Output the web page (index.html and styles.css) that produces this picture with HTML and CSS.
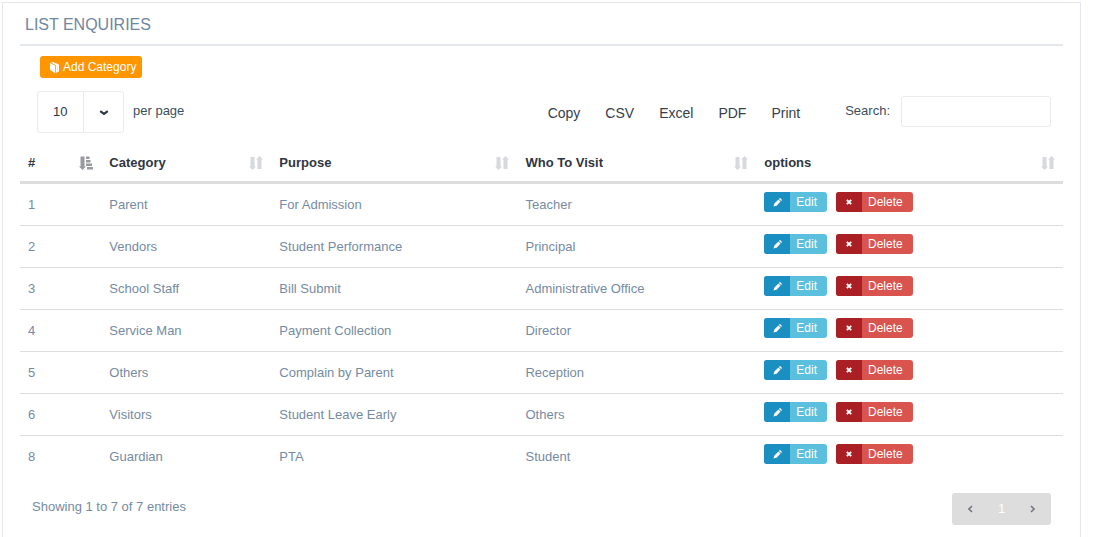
FILE: index.html
```
<!DOCTYPE html>
<html lang="en">
<head>
<meta charset="utf-8">
<title>List Enquiries</title>
<link rel="stylesheet" href="styles.css">
</head>
<body>
<svg class="sprite" aria-hidden="true">
  <symbol id="sort" viewBox="0 0 14 14"><path d="M1.5 1h4v9.500H7L3.500 14 0 10.500h1.500zM10.500 0L14 3.500h-1.500V13h-4V3.500H7z"/></symbol>
  <symbol id="sorted" viewBox="0 0 14 14"><path d="M1.500 0.500h4v10H7L3.500 14 0 10.500h1.500zM7 0.500h3.500v2.500H7zM7 4h4.500v2.500H7zM7 7.500h6V10H7zM8 11h6v2.500H8z"/></symbol>
  <symbol id="pencil" viewBox="0 0 10 10"><path d="M0.500 9.500l1-3.500L6 1.600 8.400 4 4 8.500zM6.600 1l.6-.6q.5-.4 1 0l1.400 1.400q.4.500 0 1L9 3.400z"/></symbol>
  <symbol id="cross" viewBox="0 0 6 6"><path d="M.8.8l4.400 4.400M5.200.8L.8 5.200" fill="none" stroke="currentColor" stroke-width="1.900"/></symbol>
</svg>
<main class="panel">
  <h1 class="panel-title">LIST ENQUIRIES</h1>
  <button class="add" type="button"><svg class="book" viewBox="0 0 10 11"><path d="M0 1l5 2.500V11L0 8z" fill="#fff"/><path d="M1 .8L3 0l6 2.500V9.500L5.800 11V3.200z" fill="#fff"/><path d="M1 1l4.600 2.300V11" fill="none" stroke="#ffb43c" stroke-width=".7"/><path d="M7.500 3.500v6" stroke="#ffe08a" stroke-width=".8"/></svg>Add Category</button>
  <div class="toolbar">
    <div class="length">
      <span class="select-box">
        <select class="select" id="length"><option>10</option><option>25</option><option>50</option></select>
        <svg class="chevron" viewBox="0 0 10 6"><path d="M1.200 1.200L5 4l3.800-2.800" fill="none" stroke="currentColor" stroke-width="2.200"/></svg>
      </span>
      <label for="length">per page</label>
    </div>
    <div class="exports">
      <button class="export" type="button">Copy</button>
      <button class="export" type="button">CSV</button>
      <button class="export" type="button">Excel</button>
      <button class="export" type="button">PDF</button>
      <button class="export" type="button">Print</button>
    </div>
    <div class="search">
      <label for="search">Search:</label>
      <input class="search-input" id="search" type="search">
    </div>
  </div>
  <table class="table">
    <colgroup><col class="col-id"><col class="col-category"><col class="col-purpose"><col class="col-visit"><col class="col-options"></colgroup>
    <thead>
      <tr>
        <th><span class="head">#<svg class="sort active"><use href="#sorted"/></svg></span></th>
        <th><span class="head">Category<svg class="sort"><use href="#sort"/></svg></span></th>
        <th><span class="head">Purpose<svg class="sort"><use href="#sort"/></svg></span></th>
        <th><span class="head">Who To Visit<svg class="sort"><use href="#sort"/></svg></span></th>
        <th><span class="head">options<svg class="sort"><use href="#sort"/></svg></span></th>
      </tr>
    </thead>
    <tbody id="rows"></tbody>
  </table>
  <div class="footer">
    <span class="info">Showing 1 to 7 of 7 entries</span>
    <nav class="pages" aria-label="Pages">
      <button class="page" type="button" aria-label="Previous"><svg class="arrow" viewBox="0 0 5 8"><path d="M4 1L1 4l3 3" fill="none" stroke="currentColor" stroke-width="1.6"/></svg></button>
      <button class="page current" type="button">1</button>
      <button class="page" type="button" aria-label="Next"><svg class="arrow" viewBox="0 0 5 8"><path d="M1 1l3 3-3 3" fill="none" stroke="currentColor" stroke-width="1.6"/></svg></button>
    </nav>
  </div>
</main>
<script src="app.js"></script>
</body>
</html>
```
FILE: styles.css
```
* { box-sizing: border-box; }
body {
  margin: 0;
  padding: 2px 15px 0 2px;
  background: #fff;
  color: #758ba3;
  font: 13px/18px "Liberation Sans", Arial, sans-serif;
}
button, input, select { font: inherit; color: inherit; }
button { border: 0; background: none; padding: 0; cursor: pointer; }
svg { fill: currentColor; }
.sprite { position: absolute; width: 0; height: 0; }
.panel {
  min-height: calc(100vh - 2px);
  padding: 0 17px;
  border: 1px solid #e6e6f0;
  border-bottom: 0;
}
.panel-title {
  margin: 0;
  padding: 12px 5px 9px;
  border-bottom: 2px solid #e4e8ed;
  font-size: 16px;
  line-height: 20px;
  font-weight: 400;
  color: #6f87a0;
}
.add {
  display: flex;
  align-items: center;
  gap: 3px;
  height: 22px;
  margin: 10px 0 0 20px;
  padding: 0 6px 0 10px;
  border-radius: 3px;
  background: #ff9600;
  color: #fff;
  font-size: 12px;
}
.book { width: 10px; height: 11px; }
.toolbar {
  display: flex;
  align-items: flex-start;
  margin: 13px 12px 0 17px;
  color: #3b4f5f;
}
.length { display: flex; gap: 9px; line-height: 40px; }
.select-box { position: relative; width: 87px; height: 42px; }
.select {
  appearance: none;
  width: 100%;
  height: 100%;
  padding: 0 0 0 15px;
  border: 1px solid #ebebeb;
  border-radius: 3px;
  background: linear-gradient(#ebebeb, #ebebeb) 45px 0 / 1px 100% no-repeat #fff;
  color: #303641;
}
.chevron { position: absolute; right: 15px; top: 19px; width: 10px; height: 6px; color: #303641; }
.exports { display: flex; gap: 25px; margin-left: auto; padding-top: 13px; }
.export { color: #373e4a; font-size: 14px; line-height: 18px; }
.search { display: flex; gap: 11px; margin: 5px 0 0 45px; line-height: 30px; }
.search-input {
  width: 150px;
  height: 31px;
  padding: 0 8px;
  border: 1px solid #ebebeb;
  border-radius: 3px;
}
.table {
  width: 100%;
  margin-top: 11px;
  border-collapse: separate;
  border-spacing: 0;
  table-layout: fixed;
}
.col-id { width: 7.8%; }
.col-category { width: 16.3%; }
.col-purpose { width: 23.6%; }
.col-visit { width: 22.9%; }
th {
  height: 40px;
  padding: 1px 8px 0;
  border-bottom: 3px solid #ddd;
  color: #303641;
  text-align: left;
}
.head { display: flex; justify-content: space-between; align-items: center; }
.sort { width: 14px; height: 14px; color: #d8d9dc; }
.active { color: #989aa0; }
td { height: 42px; padding: 0 8px; border-bottom: 1px solid #ddd; }
tbody tr:last-child td { border-bottom-color: transparent; }
.actions { display: flex; gap: 9px; padding-bottom: 5px; }
.action {
  display: flex;
  height: 20px;
  border-radius: 3px;
  overflow: hidden;
  color: #fff;
  font-size: 12px;
  line-height: 20px;
  text-decoration: none;
}
.action-icon { display: grid; place-items: center; width: 26px; }
.action-text { padding: 0 10px 0 6px; }
.edit { background: #5bc0de; }
.edit .action-icon { background: #1a8fc1; }
.delete { background: #d9534f; }
.delete .action-icon { background: #a91f23; }
.pencil { width: 9px; height: 9px; }
.cross { width: 6px; height: 6px; }
.footer {
  display: flex;
  align-items: flex-start;
  justify-content: space-between;
  padding: 15px 12px 12px;
}
.info { padding-top: 5px; }
.pages { display: flex; border-radius: 3px; background: #ddd; padding: 0 3px; }
.page { display: grid; place-items: center; width: 31px; height: 32px; color: #737881; }
.current { color: #fff; }
.arrow { width: 5px; height: 8px; }
```
FILE: app.js
```
const rows = [
  [1, "Parent", "For Admission", "Teacher"],
  [2, "Vendors", "Student Performance", "Principal"],
  [3, "School Staff", "Bill Submit", "Administrative Office"],
  [4, "Service Man", "Payment Collection", "Director"],
  [5, "Others", "Complain by Parent", "Reception"],
  [6, "Visitors", "Student Leave Early", "Others"],
  [8, "Guardian", "PTA", "Student"]
];
const actions = `<td><div class="actions">
  <a class="action edit" href="#edit"><span class="action-icon"><svg class="pencil"><use href="#pencil"/></svg></span><span class="action-text">Edit</span></a>
  <a class="action delete" href="#delete"><span class="action-icon"><svg class="cross"><use href="#cross"/></svg></span><span class="action-text">Delete</span></a>
</div></td>`;
document.getElementById("rows").innerHTML = rows
  .map(row => `<tr>${row.map(cell => `<td>${cell}</td>`).join("")}${actions}</tr>`)
  .join("");
```
